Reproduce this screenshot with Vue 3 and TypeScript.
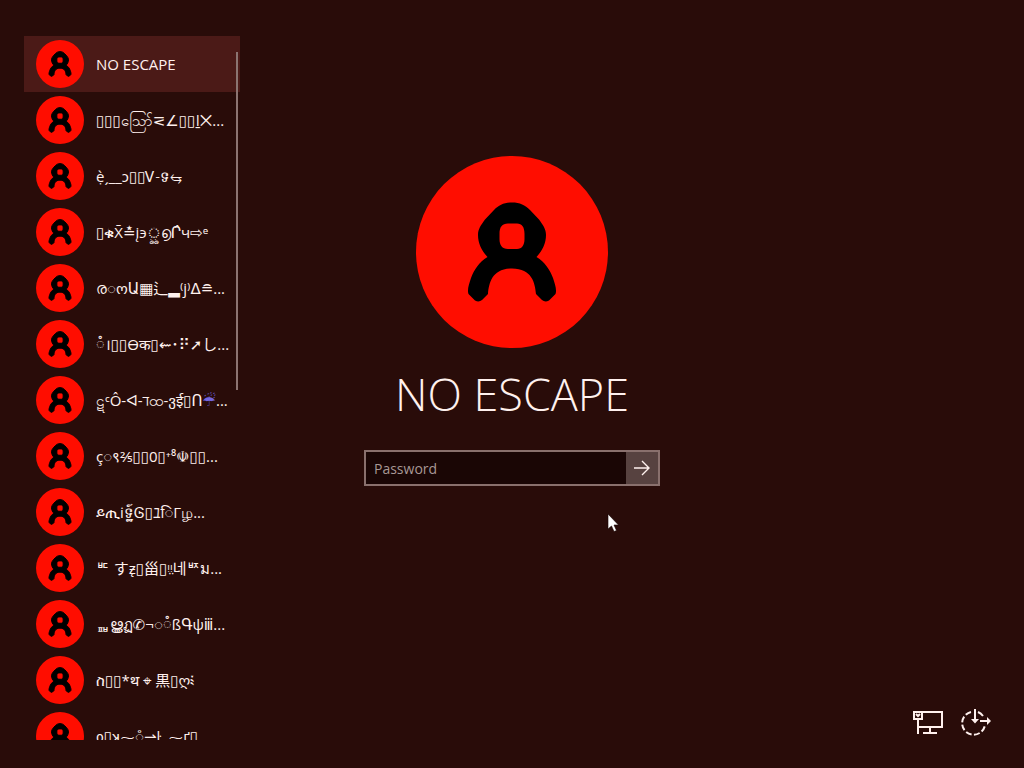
<script setup lang="ts">
import { ref } from 'vue'

interface User {
  name: string
  symbol?: string
  tail?: string
}

const users: User[] = [
  { name: 'NO ESCAPE' },
  { name: '▯▯▯ဪ⋜∠▯▯ǀ̱⨉...' },
  { name: 'ẹ̀ˏ__ɔ▯▯Ꮩ˗ទ⥃' },
  { name: '▯ቁX̄≛įэৣ൭Ր̂ч⇨ᵉ' },
  { name: 'ര◌ოԱ▦辶▂⁽j⁾ᐃ≘...' },
  { name: '◌ំ।▯▯Ѳक▯⇜･⠟➚し...' },
  { name: 'ဋᶜÔ-ᐊ-ℸထ-ვई▯Ո', symbol: '☔', tail: '...' },
  { name: 'ç◌९⅖▯▯0▯⁺⁸☫▯▯...' },
  { name: 'ይጢi̇ទ្ឋ៍Ꮆ▯ﾕिΓழ...' },
  { name: 'ᄠ すƶ̨▯甾▯ᵎᵎ̤네ᄧม...' },
  { name: 'ᇳൠฏ✆¬◌ំßԳψⅲ...' },
  { name: 'ስ▯▯*थ ⌖ 黒▯ღ༴' },
  { name: 'ი▯ʞ⁓◌̊⇀ŀ..⁓ґ▯' },
]
const selected = ref<number>(0)
const password = ref<string>('')
</script>

<template>
  <main class="screen">
    <svg class="symbols" aria-hidden="true">
      <symbol id="person" viewBox="0 0 192 192">
        <circle cx="96" cy="96" r="96" fill="#ff0d00" stroke="none" />
        <path
          fill="#000"
          fill-rule="evenodd"
          d="M96 46.500C104 46.500 109 49 114 54L123 63.500C127 69 130 73 130 79C130 88 126 95 120.500 101C129 106 134 114 137 122C139 128 141 134 139.500 138L133 144.500C130 146 128 145.500 126 144L120 138C119 127 116 112.500 96 112.500C76 112.500 73 127 72 138L66 144C64 145.500 62 146 59 144.500L52.500 138C51 134 53 128 55 122C58 114 63 106 71.500 101C66 95 62 88 62 79C62 73 65 69 69 63.500L78 54C83 49 88 46.500 96 46.500ZM92 67.500C86 67.500 83.500 71 83.500 78V83C83.500 89 86 93 92 93H101C106 93 108.500 89 108.500 83V78C108.500 71 106 67.500 101 67.500Z"
        />
      </symbol>
    </svg>

    <nav class="accounts" aria-label="Accounts">
      <ul class="list">
        <li v-for="(user, i) in users" :key="i">
          <button type="button" class="account" :class="{ active: i === selected }" @click="selected = i">
            <svg class="face" aria-hidden="true"><use href="#person" /></svg>
            <span class="label">{{ user.name }}<span v-if="user.symbol" class="symbol">{{ user.symbol }}</span>{{ user.tail }}</span>
          </button>
        </li>
      </ul>
      <span class="thumb"></span>
    </nav>

    <form class="login" @submit.prevent>
      <svg class="portrait" aria-hidden="true"><use href="#person" /></svg>
      <h1 class="name">{{ users[0].name }}</h1>
      <div class="field">
        <input v-model="password" type="password" placeholder="Password" aria-label="Password" />
        <button type="submit" class="go" aria-label="Submit">
          <svg width="18" height="18" viewBox="0 0 18 18" fill="none" stroke="#fff1ee" stroke-width="1.4">
            <path d="M1 9H16M9 2L16 9L9 16" />
          </svg>
        </button>
      </div>
    </form>

    <div class="tools">
      <button type="button" aria-label="Network">
        <svg width="32" height="32" viewBox="0 0 32 32" fill="none" stroke="#fff1ee" stroke-width="2">
          <path d="M10 6H30V21H6M6 14V28M18 21V26M11 27H25" />
          <path d="M2 6H10V13H2Z M4 8L6 10L8 8" />
        </svg>
      </button>
      <button type="button" aria-label="Ease of access">
        <svg width="32" height="32" viewBox="0 0 32 32" fill="none" stroke="#fff1ee" stroke-width="2">
          <path d="M11 6A11.500 11.500 0 1 0 25 19" stroke-dasharray="6 2.400" />
          <path d="M18 6A12 12 0 0 1 23 10" />
          <path d="M15 3V14M20 15H29" />
          <path d="M11 13L15 17.500L19 13ZM27 11L31 15L27 19Z" fill="#fff1ee" stroke="none" />
        </svg>
      </button>
    </div>

    <svg class="pointer" width="12" height="20" viewBox="0 0 12 20" aria-hidden="true">
      <path d="M1 1V16L4.500 13L7 18.500L9.500 17.500L7 12H11.500Z" fill="#fff" stroke="#1a0504" stroke-width=".6" />
    </svg>
  </main>
</template>

<style>
body {
  margin: 0;
  background: #290c09;
}
</style>

<style scoped>
.screen {
  position: relative;
  display: flex;
  justify-content: center;
  box-sizing: border-box;
  min-height: 100vh;
  overflow: hidden;
  background: #290c09;
  color: #fff1ee;
  font-family: "Open Sans", "Noto Sans", "DejaVu Sans", "Noto Sans CJK JP", sans-serif;
}
.symbols {
  position: absolute;
  width: 0;
  height: 0;
}
button {
  border: 0;
  padding: 0;
  background: none;
  color: inherit;
  font: inherit;
}
.accounts {
  position: absolute;
  top: 36px;
  bottom: 28px;
  left: 24px;
  width: 216px;
  overflow: hidden;
}
.list {
  margin: 0;
  padding: 0;
  list-style: none;
}
.account {
  display: flex;
  align-items: center;
  gap: 12px;
  width: 100%;
  height: 56px;
  padding: 0 0 0 12px;
  text-align: left;
}
.account.active {
  background: #4b1a17;
}
.face {
  flex: none;
  width: 48px;
  height: 48px;
  stroke: #000;
  stroke-width: 4px;
}
.label {
  font-size: 15px;
  line-height: 28px;
  white-space: nowrap;
}
.symbol {
  color: #7466e0;
}
.thumb {
  position: absolute;
  top: 16px;
  right: 2px;
  width: 2px;
  height: 48%;
  background: #8c7471;
}
.login {
  display: flex;
  flex-direction: column;
  align-items: center;
  padding-top: 156px;
}
.portrait {
  width: 192px;
  height: 192px;
}
.name {
  margin: 14px 0 24px;
  font-size: 45px;
  font-weight: 300;
  line-height: 64px;
  white-space: nowrap;
}
.field {
  display: flex;
  box-sizing: border-box;
  width: 296px;
  height: 36px;
  border: 2px solid #89706d;
  background: #1a0605;
}
.field input {
  flex: 1;
  min-width: 0;
  padding: 0 8px;
  border: 0;
  outline: 0;
  background: none;
  color: #fff1ee;
  font: inherit;
  font-size: 14px;
}
.field input::placeholder {
  color: #a89895;
  opacity: 1;
}
.go {
  display: flex;
  align-items: center;
  justify-content: center;
  width: 32px;
  background: #574240;
}
.tools {
  position: absolute;
  right: 32px;
  bottom: 30px;
  display: flex;
  gap: 16px;
}
.tools svg {
  display: block;
}
.pointer {
  position: absolute;
  top: 513px;
  left: 607px;
}
</style>
